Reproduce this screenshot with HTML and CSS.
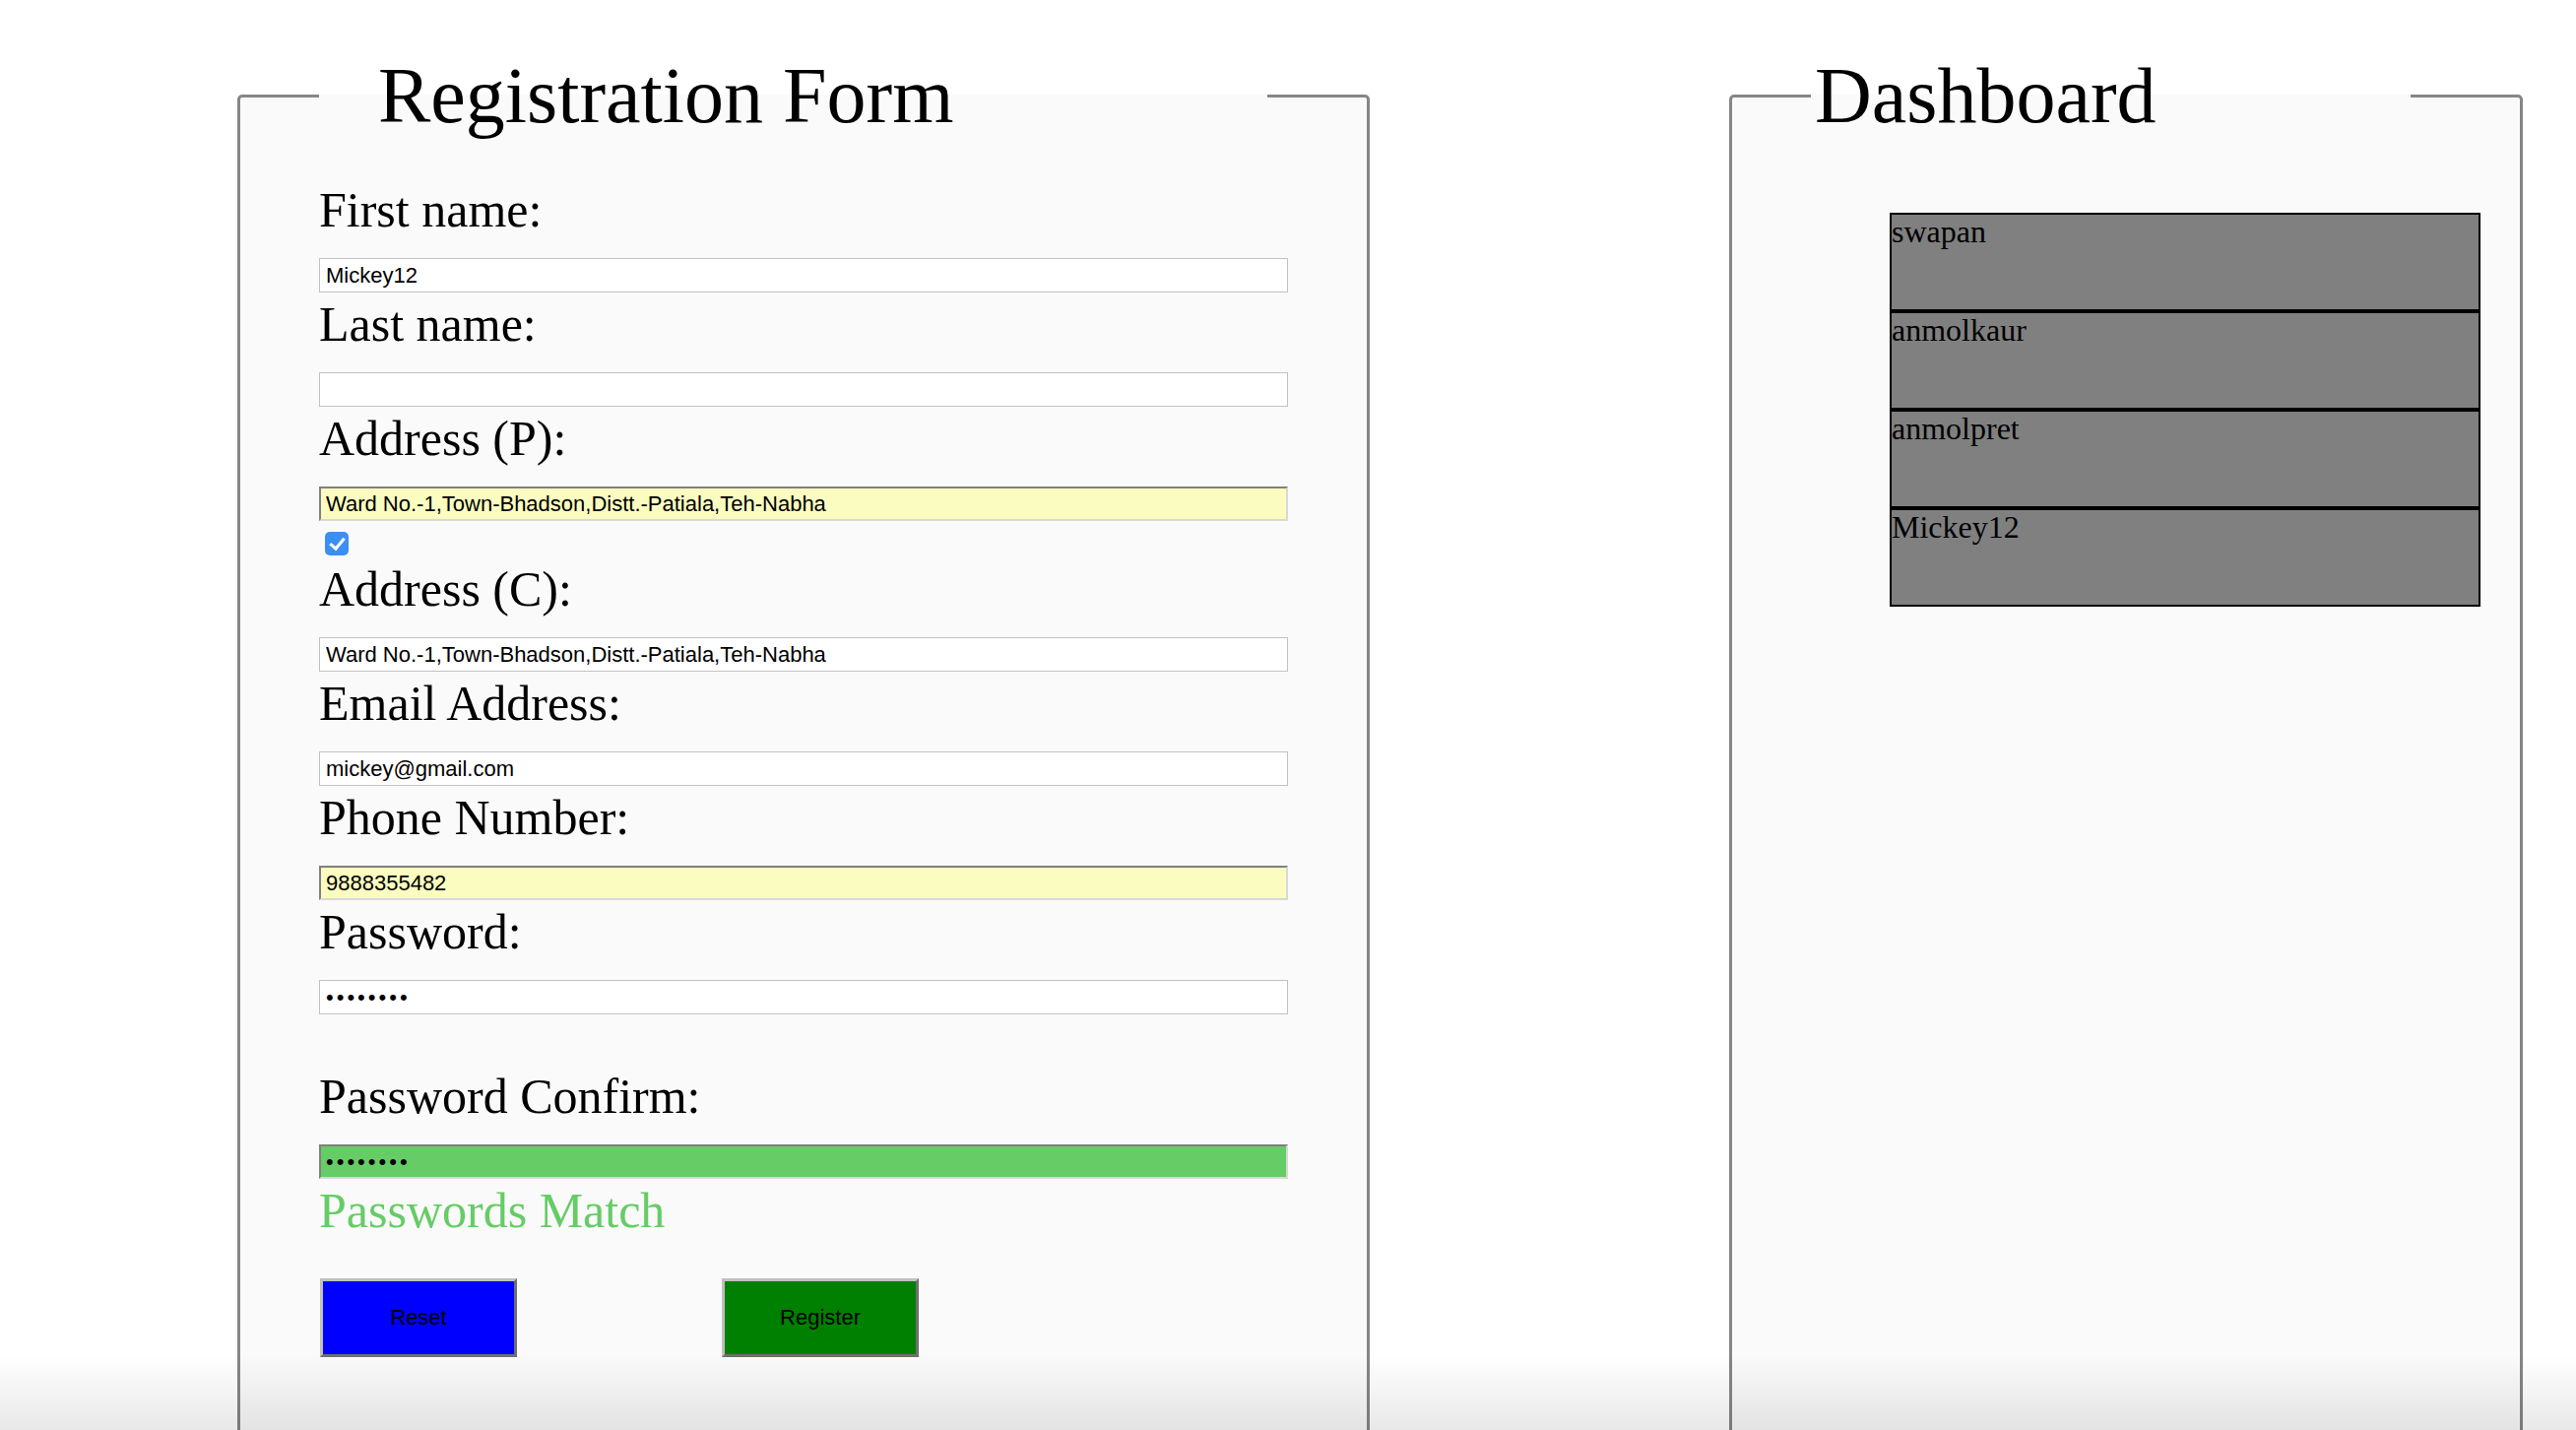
FILE: index.html
```html
<!DOCTYPE html>
<html lang="en">
<head>
<meta charset="utf-8">
<title>Registration</title>
<link rel="stylesheet" href="styles.css">
</head>
<body>
<div class="page">
  <fieldset class="panel panel-form">
    <legend class="legend legend-form">Registration Form</legend>
    <form class="form">
      <label class="field-label" for="fname">First name:</label>
      <input class="field" id="fname" type="text" value="Mickey12">
      <label class="field-label" for="lname">Last name:</label>
      <input class="field" id="lname" type="text" value="">
      <label class="field-label" for="addrp">Address (P):</label>
      <input class="field field-auto" id="addrp" type="text" value="Ward No.-1,Town-Bhadson,Distt.-Patiala,Teh-Nabha">
      <input class="same-check" type="checkbox" checked aria-label="Same as permanent address">
      <label class="field-label" for="addrc">Address (C):</label>
      <input class="field" id="addrc" type="text" value="Ward No.-1,Town-Bhadson,Distt.-Patiala,Teh-Nabha">
      <label class="field-label" for="email">Email Address:</label>
      <input class="field" id="email" type="text" value="mickey@gmail.com">
      <label class="field-label" for="phone">Phone Number:</label>
      <input class="field field-auto" id="phone" type="text" value="9888355482">
      <label class="field-label" for="pass">Password:</label>
      <input class="field field-pass" id="pass" type="password" value="12345678">
      <label class="field-label field-label-spaced" for="pass2">Password Confirm:</label>
      <input class="field field-pass field-match" id="pass2" type="password" value="12345678">
      <div class="match-msg">Passwords Match</div>
      <div class="actions">
        <button class="btn btn-reset" type="reset">Reset</button>
        <button class="btn btn-register" type="button">Register</button>
      </div>
    </form>
  </fieldset>
  <fieldset class="panel panel-dash">
    <legend class="legend legend-dash">Dashboard</legend>
    <div class="user-list">
      <div class="user">swapan</div>
      <div class="user">anmolkaur</div>
      <div class="user">anmolpret</div>
      <div class="user">Mickey12</div>
    </div>
  </fieldset>
</div>
<div class="bottom-shade"></div>
</body>
</html>
```
FILE: styles.css
```css
html, body {
  margin: 0;
  padding: 0;
  height: 100%;
  overflow: hidden;
  background: #ffffff;
}

body {
  font-family: "Liberation Serif", "Times New Roman", serif;
  color: #000;
}

.page {
  display: flex;
  align-items: flex-start;
  gap: 365px;
  padding: 53px 0 0 241px;
}

.panel {
  margin: 0;
  box-sizing: border-box;
  min-width: 0;
  min-height: 1520px;
  border: 3px solid #868686;
  border-radius: 5px;
  background: #fafafa;
  padding: 42px 80px 0 80px;
}

.panel-form {
  width: 1150px;
}

.panel-dash {
  width: 806px;
}

.legend {
  box-sizing: border-box;
  font-size: 80px;
  line-height: 88px;
  padding: 0;
}

.legend-form {
  width: 963px;
  padding-left: 60px;
}

.legend-dash {
  width: 609px;
  padding-left: 4px;
}

.form {
  display: flex;
  flex-direction: column;
  align-items: flex-start;
  margin: 0;
}

.field-label {
  display: block;
  font-size: 50px;
  line-height: 60px;
  margin-bottom: 19px;
}

.field-label-spaced {
  margin-top: 51px;
}

.field {
  display: block;
  box-sizing: border-box;
  width: 984px;
  height: 35px;
  margin: 0 0 2px 0;
  padding: 0 6px;
  border: 1px solid #c2c2c2;
  background: #ffffff;
  font-family: "Liberation Sans", Arial, sans-serif;
  font-size: 22px;
  color: #000;
  outline: none;
}

.field-auto {
  border-width: 2px;
  border-style: solid;
  border-color: #808080 #d8d8d8 #d8d8d8 #808080;
  padding-left: 5px;
  background: #fafdbf;
}

.field-pass {
  letter-spacing: 3px;
}

.field-match {
  border-width: 2px;
  border-style: solid;
  border-color: #808080 #d8d8d8 #d8d8d8 #808080;
  padding-left: 5px;
  background: #66cc66;
}

.same-check {
  appearance: none;
  -webkit-appearance: none;
  position: relative;
  display: block;
  width: 24px;
  height: 24px;
  margin: 9px 0 4px 6px;
  border-radius: 5px;
  background: #3b8ef4;
}

.same-check::after {
  content: "";
  position: absolute;
  left: 8px;
  top: 3px;
  width: 6px;
  height: 12px;
  border-right: 3px solid #fff;
  border-bottom: 3px solid #fff;
  transform: rotate(40deg);
}

.match-msg {
  font-size: 50px;
  line-height: 60px;
  color: #66cc66;
}

.actions {
  display: flex;
  gap: 208px;
  margin: 39px 0 0 1px;
}

.btn {
  box-sizing: border-box;
  width: 200px;
  height: 80px;
  border: 3px solid;
  border-color: #c0c0c0 #6f6f6f #6f6f6f #c0c0c0;
  border-radius: 0;
  font-family: "Liberation Sans", Arial, sans-serif;
  font-size: 22px;
  color: #000;
  padding: 0;
}

.btn-reset {
  background: #0000ff;
}

.btn-register {
  background: #008000;
}

.user-list {
  margin: 33px 0 0 80px;
  width: 600px;
}

.user {
  box-sizing: border-box;
  height: 100px;
  border: 2px solid #000;
  background: #808080;
  font-size: 32px;
  line-height: 34px;
}

.bottom-shade {
  position: fixed;
  left: 0;
  right: 0;
  bottom: 0;
  height: 76px;
  pointer-events: none;
  background: linear-gradient(to bottom, rgba(0, 0, 0, 0), rgba(0, 0, 0, 0.09));
}
```
